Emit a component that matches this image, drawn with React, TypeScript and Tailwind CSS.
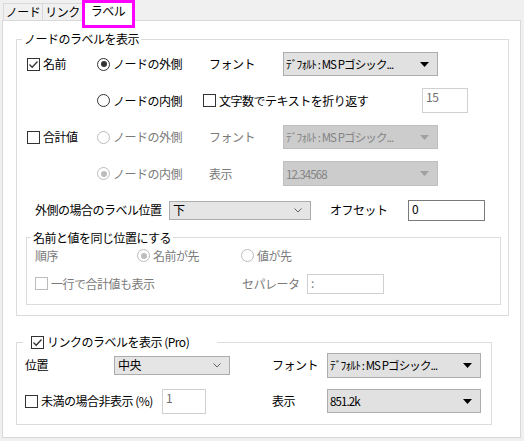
import type { ReactNode } from 'react';

type BoxProps = { checked?: boolean; disabled?: boolean };

function Check({ checked, disabled }: BoxProps) {
  return (
    <span
      className={`inline-flex w-[13px] h-[13px] shrink-0 items-center justify-center border bg-white ${
        disabled ? 'border-[#bcbcbc]' : 'border-[#333333]'
      }`}
    >
      {checked && (
        <svg width="11" height="11" viewBox="0 0 11 11">
          <path d="M1.5 5.5 L4.2 8.2 L9.5 2.5" fill="none" stroke="#333333" strokeWidth="1.3" />
        </svg>
      )}
    </span>
  );
}

function Radio({ checked, disabled }: BoxProps) {
  return (
    <span
      className={`inline-flex w-[13px] h-[13px] shrink-0 items-center justify-center rounded-full border bg-white ${
        disabled ? 'border-[#bcbcbc]' : 'border-[#333333]'
      }`}
    >
      {checked && (
        <span className={`w-[6px] h-[6px] rounded-full ${disabled ? 'bg-[#bcbcbc]' : 'bg-[#333333]'}`} />
      )}
    </span>
  );
}

function Label({ control, children, disabled, className = '' }: { control: ReactNode; children: ReactNode; disabled?: boolean; className?: string }) {
  return (
    <div className={`flex items-center gap-[3px] shrink-0 ${disabled ? 'text-[#7a7a7a]' : ''} ${className}`}>
      {control}
      <span className="whitespace-nowrap">{children}</span>
    </div>
  );
}

// コンボ（黒い三角）
function Combo({ text, disabled, className = '' }: { text: string; disabled?: boolean; className?: string }) {
  return (
    <div
      className={`flex items-center justify-between shrink-0 border pl-[2px] pr-[8px] ${
        disabled ? 'bg-[#cccccc] border-[#bfbfbf] text-[#838383]' : 'bg-[#e1e1e1] border-[#adadad]'
      } ${className}`}
    >
      <span className="whitespace-nowrap text-[11.5px] tracking-[-0.9px]">{text}</span>
      <svg width="9" height="5" viewBox="0 0 9 5" className="shrink-0 ml-[2px]">
        <polygon points="0,0 9,0 4.5,5" fill={disabled ? '#a0a0a0' : '#000000'} />
      </svg>
    </div>
  );
}

// セレクト（山形の矢印）
function Select({ text, className = '' }: { text: string; className?: string }) {
  return (
    <div className={`flex items-center justify-between shrink-0 border border-[#acacac] bg-[#e5e5e5] pl-[3px] pr-[8px] ${className}`}>
      <span className="whitespace-nowrap">{text}</span>
      <svg width="8" height="5" viewBox="0 0 8 5" className="shrink-0">
        <path d="M0.5 0.5 L4 4 L7.5 0.5" fill="none" stroke="#606060" strokeWidth="1" />
      </svg>
    </div>
  );
}

function TextBox({ text, gray, dark, className = '' }: { text: string; gray?: boolean; dark?: boolean; className?: string }) {
  return (
    <div
      className={`shrink-0 bg-white border pl-[3px] pt-[1px] whitespace-nowrap ${
        dark ? 'border-[#7a7a7a]' : 'border-[#d0d0d0]'
      } ${gray ? 'text-[#6d6d6d]' : ''} ${className}`}
    >
      {text}
    </div>
  );
}

export default function App() {
  return (
    <div className="w-[524px] h-[441px] overflow-hidden bg-[#f0f0f0] text-black text-[12px] leading-[14px] tracking-[-0.5px] font-['Noto_Sans_CJK_JP','Noto_Sans',sans-serif]">
      {/* タブ */}
      <div className="flex items-end h-[20px] pl-[3px]">
        <div className="w-[40px] h-[17px] flex items-center justify-center border border-b-0 border-[#d9d9d9] bg-[#f0f0f0]">ノード</div>
        <div className="w-[40px] h-[17px] flex items-center justify-center border border-b-0 border-l-0 border-[#d9d9d9] bg-[#f0f0f0]">リンク</div>
        <div className="relative z-10 w-[50px] h-[21px] -mb-px flex items-center justify-center bg-white border border-b-0 border-[#d9d9d9]">
          ラベル
          <div className="absolute left-[-2px] top-[-1px] w-[53px] h-[28px] border-[3px] border-[#ff00ff]" />
        </div>
      </div>

      <div className="ml-[2px] w-[519px] h-[418px] bg-white border border-[#d9d9d9]">
        {/* ノードのラベルを表示 */}
        <fieldset className="ml-[13px] mt-[11px] w-[493px] h-[284px] border border-[#dcdcdc]">
          <legend className="ml-[5px] px-[2px]">ノードのラベルを表示</legend>
          <div className="pl-[10px]">
            <div className="flex items-center h-[36.5px]">
              <Label control={<Check checked />} className="w-[70px]">名前</Label>
              <Label control={<Radio checked />} className="w-[112px]">ノードの外側</Label>
              <div className="w-[74px] shrink-0">フォント</div>
              <Combo text="ﾃﾞﾌｫﾙﾄ : MS Pゴシック..." className="w-[155px] h-[24px]" />
            </div>
            <div className="flex items-center h-[36.5px]">
              <div className="w-[70px] shrink-0" />
              <Label control={<Radio />} className="w-[106px]">ノードの内側</Label>
              <Label control={<Check />} className="w-[219px]">文字数でテキストを折り返す</Label>
              <TextBox text="15" gray className="w-[46px] h-[25px]" />
            </div>
            <div className="flex items-center h-[36.5px]">
              <Label control={<Check />} className="w-[70px]">合計値</Label>
              <Label control={<Radio disabled />} disabled className="w-[112px]">ノードの外側</Label>
              <div className="w-[74px] shrink-0 text-[#7a7a7a]">フォント</div>
              <Combo text="ﾃﾞﾌｫﾙﾄ : MS Pゴシック..." disabled className="w-[155px] h-[24px]" />
            </div>
            <div className="flex items-center h-[36.5px]">
              <div className="w-[70px] shrink-0" />
              <Label control={<Radio checked disabled />} disabled className="w-[112px]">ノードの内側</Label>
              <div className="w-[74px] shrink-0 text-[#7a7a7a]">表示</div>
              <Combo text="12.34568" disabled className="w-[155px] h-[25px]" />
            </div>
            <div className="flex items-center h-[36.5px] pl-[8px]">
              <div className="w-[134px] shrink-0 whitespace-nowrap">外側の場合のラベル位置</div>
              <Select text="下" className="w-[142px] h-[19px]" />
              <div className="ml-[19px] w-[78px] shrink-0">オフセット</div>
              <TextBox text="0" dark className="w-[77px] h-[21px]" />
            </div>
          </div>

          {/* 名前と値を同じ位置にする */}
          <fieldset className="ml-[9px] mt-[2px] w-[475px] h-[74px] border border-[#dcdcdc]">
            <legend className="ml-[4px] px-[2px]">名前と値を同じ位置にする</legend>
            <div className="pl-[8px] text-[#7a7a7a]">
              <div className="flex items-center h-[22px]">
                <div className="w-[102px] shrink-0">順序</div>
                <Label control={<Radio checked disabled />} className="w-[104px]">名前が先</Label>
                <Label control={<Radio disabled />}>値が先</Label>
              </div>
              <div className="flex items-center h-[24px] mt-[5px]">
                <Label control={<Check disabled />} className="w-[207px]">一行で合計値も表示</Label>
                <div className="w-[65px] shrink-0">セパレータ</div>
                <TextBox text=":" className="w-[77px] h-[20px]" />
              </div>
            </div>
          </fieldset>
        </fieldset>

        {/* リンクのラベルを表示 */}
        <fieldset className="ml-[13px] mt-[19px] w-[476px] h-[90px] border border-[#dcdcdc]">
          <legend className="ml-[6px] w-[194px] pl-[8px] bg-white">
            <Label control={<Check checked />}>リンクのラベルを表示 (Pro)</Label>
          </legend>
          <div className="pl-[8px]">
            <div className="flex items-center h-[30px] mt-[1px]">
              <div className="w-[89px] shrink-0">位置</div>
              <Select text="中央" className="w-[116px] h-[19px]" />
              <div className="ml-[42px] w-[55px] shrink-0">フォント</div>
              <Combo text="ﾃﾞﾌｫﾙﾄ : MS Pゴシック..." className="w-[154px] h-[25px]" />
            </div>
            <div className="flex items-center h-[30px] mt-[6px]">
              <Label control={<Check />} className="w-[137px]">未満の場合非表示 (%)</Label>
              <TextBox text="1" gray className="w-[44px] h-[25px]" />
              <div className="ml-[66px] w-[55px] shrink-0">表示</div>
              <Combo text="851.2k" className="w-[154px] h-[24px]" />
            </div>
          </div>
        </fieldset>
      </div>
    </div>
  );
}
